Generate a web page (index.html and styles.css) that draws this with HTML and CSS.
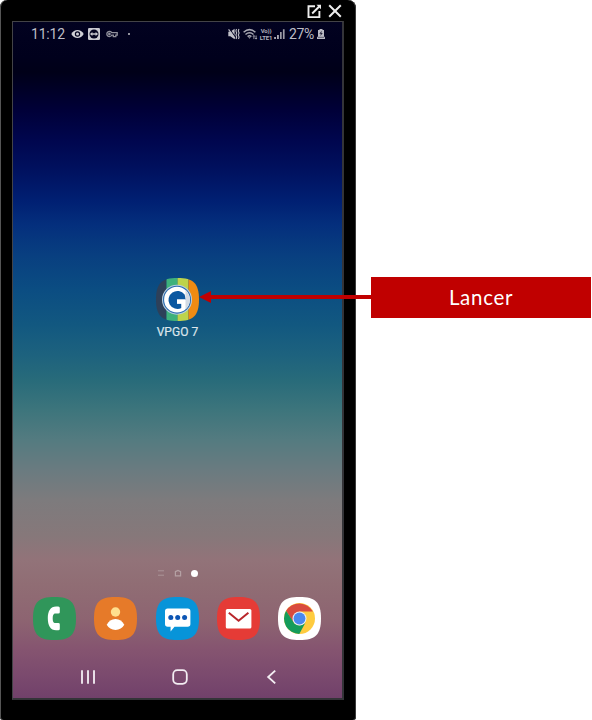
FILE: index.html
```html
<!DOCTYPE html>
<html lang="fr">
<head>
<meta charset="utf-8">
<title>VPGO 7</title>
<link rel="stylesheet" href="styles.css">
</head>
<body>
<main class="figure">
  <section class="phone">
    <header class="window-bar">
      <svg width="15" height="15" viewBox="0 0 15 15" fill="none" stroke="#eee" stroke-width="1.9"><path d="M8 2.2H1.5v10.9h10.9V7M5.2 9.5l7-7"/><path d="M9.5.8H14v4.5z" fill="#eee" stroke="none"/></svg>
      <svg width="14" height="14" viewBox="0 0 14 14" fill="none" stroke="#eee" stroke-width="2"><path d="M1.2 1.2l11.6 11.6M12.8 1.2L1.2 12.8"/></svg>
    </header>
    <div class="screen">
      <div class="status">
        <div class="status-left">
          <span class="clock">11:12</span>
          <svg class="eye" width="13" height="10" viewBox="0 0 13 10"><path d="M.3 5C3-.4 10-.4 12.7 5 10 10.4 3 10.4.3 5z" fill="#d0d0d6"/><circle cx="6.5" cy="5" r="2.7" fill="#03031f"/><circle cx="6.5" cy="5" r="1.5" fill="#d0d0d6"/></svg>
          <svg class="remote" width="12" height="12" viewBox="0 0 12 12"><rect width="12" height="12" rx="1.2" fill="#c9c9d0"/><circle cx="6" cy="6" r="4.500" fill="#03031f"/><path d="M1.900 6l2.500-2v1.300h3.200V4l2.500 2-2.500 2V6.700H4.400V8z" fill="#c9c9d0"/></svg>
          <svg class="key" width="12" height="8" viewBox="0 0 12 8" fill="none" stroke="#92929d" stroke-width="1.300"><path d="M5.700 2.600A2.600 2.600 0 1 0 5.700 5.200H7.300V6.600H9.800V5.200H11.200V2.600z"/><circle cx="3.400" cy="3.900" r=".7"/></svg>
          <i class="more"></i>
        </div>
        <div class="status-right">
          <svg width="12" height="12" viewBox="0 0 12 12"><path d="M.3 3.800h2L6.600.8v10.400L2.300 8.200h-2z" fill="#c0c0c8"/><path d="M1.500.8l5.600 8" stroke="#03031f" stroke-width="1.100"/><path d="M.6 1.400l6.400 9" stroke="#c0c0c8" stroke-width="1.100"/><path d="M8.500 1l-.6 2 .8 2-.8 2 .8 2-.6 2M10.900 1l-.6 2 .8 2-.8 2 .8 2-.6 2" fill="none" stroke="#c0c0c8" stroke-width="1.100"/></svg>
          <svg class="wifi" width="15" height="12" viewBox="0 0 15 12" fill="none" stroke="#a9a9b3" stroke-width="1.500"><path d="M.6 4.300Q6.500-1 12.400 4.300M2.500 6.500Q6.500 3.100 10.500 6.500M4.600 8.600Q6.500 7 8.400 8.600"/><path d="M5.200 9.200h2.600l-1.300 1.500z" fill="#a9a9b3" stroke="none"/><path d="M10.900 7.500v3.600M13.100 7.500v3.600M10 8.600l.9-1.100.9 1.100M12.200 10l.9 1.100.9-1.100" stroke-width=".9"/></svg>
          <span class="volte"><span>Vo))</span><span>LTE1</span></span>
          <svg class="signal" width="11" height="10" viewBox="0 0 11 10"><path d="M.2 8h1.700v2H.2zM3.100 6h1.700v4H3.100z" fill="#b9b9c2"/><path d="M6 3h1.700v7H6zM8.900.3h1.700V10H8.900z" fill="#9d9da7"/></svg>
          <span class="percent">27%</span>
          <svg class="battery" width="8" height="10" viewBox="0 0 8 10"><path d="M2.500 0h3v.9H7v6.300L8 8.500V10H0V8.500l1-1.300V.9h1.500z" fill="#b9b9c2"/><path d="M4.700 1.800L2.300 4.800h1.500L3.400 7l2.400-3H4.300z" fill="#22223a"/><path d="M1 8.300h6" stroke="#22223a" stroke-width=".6"/></svg>
        </div>
      </div>
      <div class="home">
        <div class="launcher">
          <svg width="43" height="43" viewBox="0 0 43 43">
            <defs><clipPath id="tile"><path d="M21.500 0C37.500 0 43 5.500 43 21.500S37.500 43 21.500 43 0 37.500 0 21.500 5.500 0 21.500 0z"/></clipPath></defs>
            <g clip-path="url(#tile)"><path d="M0 0h10.500v43H0z" fill="#2d4059"/><path d="M10.500 0h11v43h-11z" fill="#3eb17b"/><path d="M21.500 0h11v43h-11z" fill="#bdd34b"/><path d="M32.500 0H43v43H32.500z" fill="#ef8b13"/></g>
            <circle cx="21" cy="21.700" r="15" fill="#b8cde0"/><circle cx="21" cy="21.700" r="14" fill="#2a6bae"/><circle cx="21" cy="21.700" r="12.900" fill="#fff"/>
            <path d="M29.500 12A13 13 0 0 1 29.500 31.500z" fill="#d3dbe4"/>
            <path d="M28.600 16.500A9 9 0 1 0 25.500 30V25.800H21V21.500H29.500L29 18z" fill="#0b58a1"/>
            <path d="M21 21.500h8v9.500l-3.500 2.200V25.500H21z" fill="#fff"/>
          </svg>
          <span class="launcher-name">VPGO 7</span>
        </div>
      </div>
      <div class="pages">
        <svg width="8" height="8" viewBox="0 0 8 8" fill="none" stroke="#ab9599"><path d="M1 1.800h6M1 6.200h6"/></svg>
        <svg width="8" height="8" viewBox="0 0 8 8" fill="none" stroke="#b5a1a4" stroke-width="1.200"><path d="M1.400 2.600L4 1.400l2.600 1.200v4.200H1.400z"/></svg>
        <i class="current"></i>
      </div>
      <nav class="dock">
        <svg width="43" height="43" viewBox="0 0 43 43"><path class="green" d="M21.500 0C37.500 0 43 5.500 43 21.500S37.500 43 21.500 43 0 37.500 0 21.500 5.500 0 21.500 0z"/><path d="M25.300 9.500h-2.200C17.500 9.500 14.800 14 14.800 21.300S17.500 33.300 23.100 33.300h2.200q1.500 0 1.500-1.500V27.500q0-1.400-1.500-1.400H21.600C20.200 25.500 19.700 24 19.700 21.400s.5-4.200 1.900-4.800h3.700q1.500 0 1.500-1.400V11q0-1.500-1.500-1.500z" fill="#fff"/></svg>
        <svg width="43" height="43" viewBox="0 0 43 43"><path class="orange" d="M21.500 0C37.500 0 43 5.500 43 21.500S37.500 43 21.500 43 0 37.500 0 21.500 5.500 0 21.500 0z"/><circle cx="21.500" cy="15" r="4.700" fill="#ffdf8e"/><path d="M12.700 27.800C14.500 24 17.500 21.900 21.500 21.900s7 2.100 8.800 5.900C28.300 31 25.500 33 21.500 33s-6.800-2-8.800-5.200z" fill="#fff"/></svg>
        <svg width="43" height="43" viewBox="0 0 43 43"><path class="blue" d="M21.500 0C37.500 0 43 5.500 43 21.500S37.500 43 21.500 43 0 37.500 0 21.500 5.500 0 21.500 0z"/><path d="M11.700 11.500h20q2.700 0 2.700 2.700v12.900q0 2.700-2.700 2.700H18.500l-3.900 4.600V29.800h-2.900Q9 29.800 9 27.100V14.200q0-2.700 2.700-2.700z" fill="#fff"/><g fill="#0c55b4"><circle cx="14.800" cy="20.600" r="2.500"/><circle cx="21.700" cy="20.600" r="2.500"/><circle cx="28.600" cy="20.600" r="2.500"/></g></svg>
        <svg width="43" height="43" viewBox="0 0 43 43"><path class="red" d="M21.500 0C37.500 0 43 5.500 43 21.500S37.500 43 21.500 43 0 37.500 0 21.500 5.500 0 21.500 0z"/><rect x="8.800" y="12" width="25.600" height="19.400" rx="1.500" fill="#fff"/><path d="M11.800 15.800l9.800 8 9.800-8" fill="none" stroke="#b8262b" stroke-width="2"/></svg>
        <svg width="43" height="43" viewBox="0 0 43 43"><path fill="#fff" d="M21.500 0C37.500 0 43 5.500 43 21.500S37.500 43 21.500 43 0 37.500 0 21.500 5.500 0 21.500 0z"/><circle cx="21.500" cy="21.500" r="15.500" fill="#fecb3f"/><path d="M8.100 13.700A15.500 15.500 0 0 1 34.900 14.500H21.500L15.100 24.900z" fill="#d94b3e"/><path d="M8.100 13.700L15.400 25C17 28.400 22.500 30 27.500 25.400L21.300 37A15.500 15.500 0 0 1 8.100 13.700z" fill="#149c5b"/><circle cx="21.500" cy="21.500" r="7" fill="#e9eef5"/><circle cx="21.500" cy="21.500" r="5.900" fill="#4a88ef"/></svg>
      </nav>
      <footer class="nav">
        <svg width="16" height="16" viewBox="0 0 16 16" fill="none" stroke="#e8dfe7" stroke-width="2"><path d="M2 1.200v13.600M8 1.200v13.600M14 1.200v13.600"/></svg>
        <svg width="16" height="16" viewBox="0 0 16 16" fill="none" stroke="#f3edf2" stroke-width="1.800"><rect x="1.200" y="1.200" width="13.600" height="13.600" rx="4.200"/></svg>
        <svg width="16" height="16" viewBox="0 0 16 16" fill="none" stroke="#f3edf2" stroke-width="1.900"><path d="M12.200 1.600L5.200 8l7 6.400"/></svg>
      </footer>
    </div>
  </section>
  <aside class="callout">
    <svg class="arrow" width="172" height="12" viewBox="0 0 172 12" fill="#c00000"><path d="M0 6L12 0v4h160v4H12v4z"/></svg>
    <span class="callout-text">Lancer</span>
  </aside>
</main>
</body>
</html>
```
FILE: styles.css
```css
* { box-sizing: border-box; }
body { margin: 0; background: #fff; font-family: Roboto, sans-serif; }
svg { display: block; flex: none; }
.figure { display: flex; width: 592px; height: 720px; overflow: hidden; }
.phone {
  width: 356px; height: 720px; padding: 0 12px 20px;
  display: flex; flex-direction: column;
  background: #000; border-radius: 7px 8px 3px 3px;
  box-shadow: inset 1px 0 #555, inset -1px 0 #3b3b3b;
}
.window-bar {
  height: 21px; padding: 4px 2px 0 0;
  display: flex; justify-content: flex-end; gap: 6px;
}
.screen {
  flex: 1; display: flex; flex-direction: column;
  border: 1px solid #434347; border-right-width: 2px; border-bottom-width: 2px;
  border-right-color: #343438; border-bottom-color: #343438;
  background: linear-gradient(#020220 0, #00001c 35px, #000018 50px, #000038 88px, #00064e 118px, #00115f 148px, #001f72 178px, #042f7d 203px, #083f80 233px, #0b4d82 268px, #125880 303px, #1d627e 333px, #286b7a 358px, #3d757c 388px, #547b80 418px, #6a7b80 448px, #7d7b7d 478px, #86787a 513px, #927379 538px, #906d74 563px, #8d6471 598px, #855470 628px, #7b4a6e 653px, #70406a 678px);
}
.status {
  height: 24px; padding: 0 17px 0 18px;
  display: flex; align-items: center; justify-content: space-between;
  color: #bdbdc6;
}
.status-left, .status-right { display: flex; align-items: center; }
.clock { width: 34px; font-size: 14px; line-height: 16px; letter-spacing: -.2px; }
.eye { margin-left: 6px; }
.remote { margin-left: 4px; }
.key { margin-left: 6px; }
.more { width: 2px; height: 2px; margin-left: 10px; background: #92929d; }
.wifi { margin-left: 3px; }
.volte {
  width: 14px; margin-left: 1px; display: flex; flex-direction: column; align-items: center;
  font-size: 6px; line-height: 7px; font-weight: 700; letter-spacing: -.2px; color: #b2b2bb;
}
.signal { margin-left: 1px; }
.percent { margin-left: 4px; width: 25px; font-size: 14px; line-height: 16px; letter-spacing: -.4px; }
.battery { margin-left: 3px; }
.home { height: 521px; padding-top: 232px; display: flex; justify-content: center; align-items: flex-start; }
.launcher { display: flex; flex-direction: column; align-items: center; gap: 4px; }
.launcher-name { font-size: 12px; line-height: 15px; letter-spacing: .05px; color: #dde6ec; -webkit-text-stroke: .2px #dde6ec; }
.pages { height: 12px; display: flex; justify-content: center; align-items: center; gap: 9px; }
.current { width: 7px; height: 7px; border-radius: 50%; background: #fff; }
.dock { margin-top: 18px; padding: 0 21px 0 20px; display: flex; justify-content: space-between; }
.green { fill: #30965a; }
.orange { fill: #e67a29; }
.blue { fill: #0794d9; }
.red { fill: #e53b36; }
.nav { margin-top: 29px; padding: 0 63px 0 67px; display: flex; justify-content: space-between; }
.callout {
  position: relative; width: 220px; height: 41px; margin: 277px 0 0 15px;
  display: flex; align-items: center; justify-content: center; background: #c00000;
}
.arrow { position: absolute; right: 220px; top: 14px; }
.callout-text { color: #fff; font: 20.5px/24px Lato, sans-serif; letter-spacing: .7px; margin-top: -1px; }
```
